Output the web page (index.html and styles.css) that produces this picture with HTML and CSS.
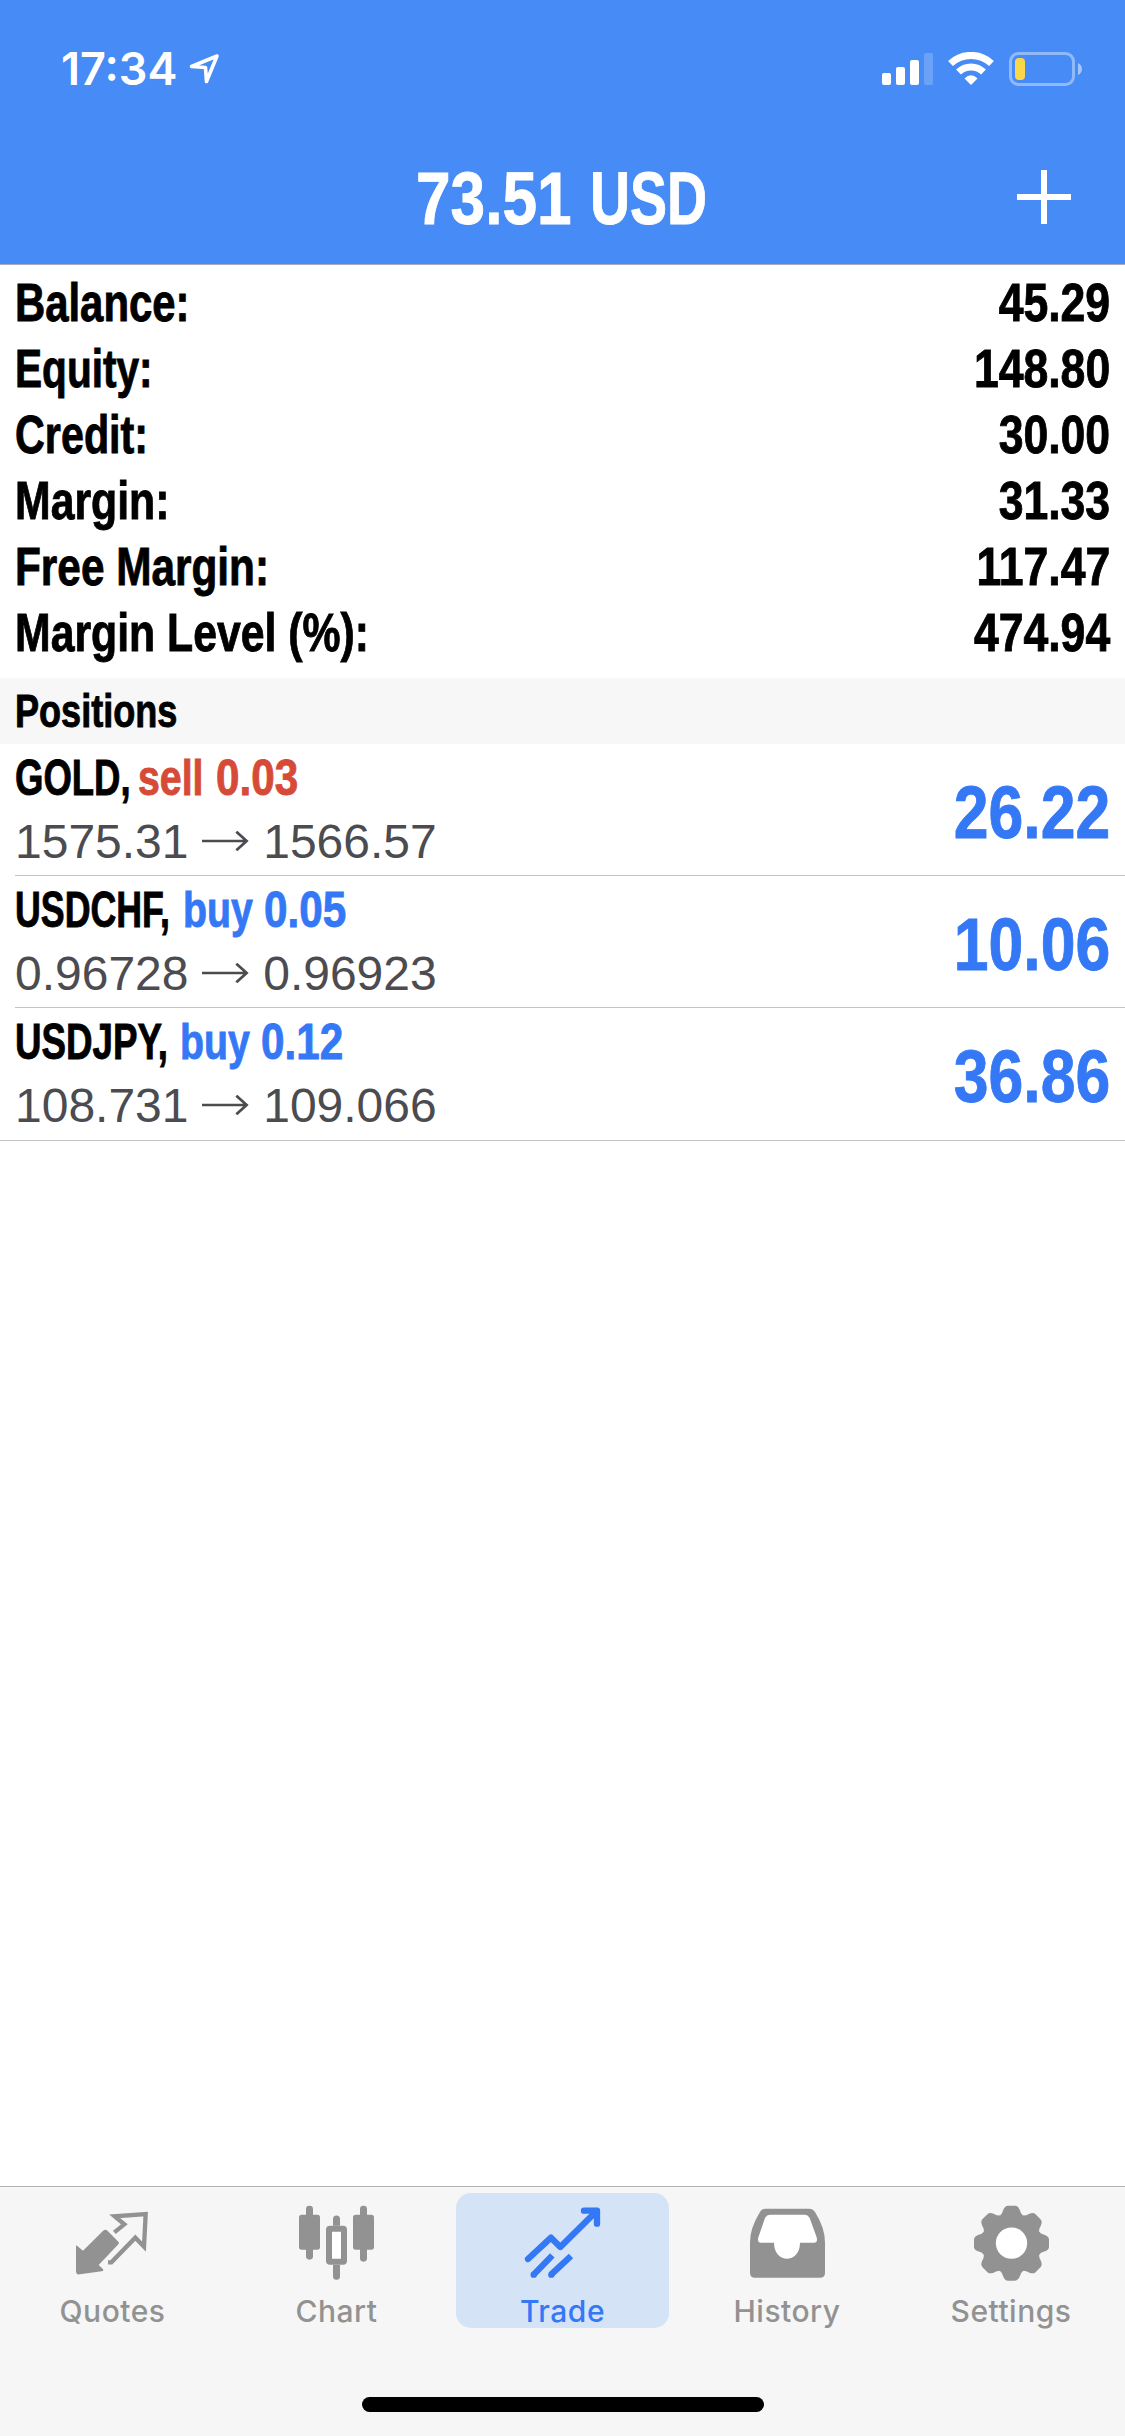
FILE: index.html
```html
<!DOCTYPE html>
<html lang="en">
<head>
<meta charset="utf-8">
<title>Trade</title>
<link rel="stylesheet" href="styles.css">
</head>
<body>
<div class="app">
  <header class="header">
    <div class="status">
      <span class="time">17:34</span>
      <svg class="location" viewBox="0 0 32 32" width="32" height="32"><path d="M3.500 13.500 29 3 18.500 28.500 17.500 14.500Z" fill="none" stroke="#fff" stroke-width="3.600" stroke-linejoin="round"/></svg>
      <svg class="indicators" viewBox="882 52 201 34" width="201" height="34">
        <g fill="#fff">
          <rect x="882" y="73" width="9" height="12" rx="2"/>
          <rect x="896" y="67" width="9" height="18" rx="2"/>
          <rect x="910" y="60" width="9" height="25" rx="2"/>
          <rect x="924" y="53" width="9" height="32" rx="2" opacity=".2"/>
        </g>
        <g fill="none" stroke="#fff">
          <path d="M950.500 63.500A30 30 0 0 1 991.500 63.500" stroke-width="7"/>
          <path d="M958.500 72A18 18 0 0 1 983.500 72" stroke-width="7"/>
        </g>
        <path d="M964.500 78.500Q971 72 977.500 78.500L971 85Z" fill="#fff"/>
        <rect x="1010.500" y="53.500" width="63" height="31" rx="8" fill="none" stroke="#fff" stroke-opacity=".4" stroke-width="3"/>
        <path d="M1078 63Q1082 65 1082 69T1078 75Z" fill="#fff" opacity=".5"/>
        <rect x="1015" y="58" width="10" height="22" rx="4" fill="#f9d749"/>
      </svg>
    </div>
    <div class="titlebar">
      <h1 class="title"><span class="amount">73.51</span> <span class="currency">USD</span></h1>
      <svg class="plus" viewBox="0 0 54 54" width="54" height="54"><path d="M0 27H54M27 0V54" stroke="#fff" stroke-width="6"/></svg>
    </div>
  </header>
  <main class="content">
    <dl class="summary">
      <div class="line balance"><dt>Balance:</dt><dd>45.29</dd></div>
      <div class="line equity"><dt>Equity:</dt><dd>148.80</dd></div>
      <div class="line credit"><dt>Credit:</dt><dd>30.00</dd></div>
      <div class="line"><dt>Margin:</dt><dd>31.33</dd></div>
      <div class="line free"><dt>Free Margin:</dt><dd>117.47</dd></div>
      <div class="line"><dt>Margin Level (%):</dt><dd>474.94</dd></div>
    </dl>
    <h2 class="section"><span class="section-name">Positions</span></h2>
    <ul class="positions">
      <li class="position gold">
        <div class="info">
          <div class="deal"><span class="symbol">GOLD,</span> <span class="side sell">sell</span> <span class="volume sell">0.03</span></div>
          <div class="prices">1575.31 <svg class="arrow" viewBox="0 0 144 60" width="48" height="20"><path d="M0 30H134M103 2 134 30 103 58" fill="none" stroke="currentColor" stroke-width="8"/></svg> 1566.57</div>
        </div>
        <div class="profit">26.22</div>
      </li>
      <li class="position usdchf">
        <div class="info">
          <div class="deal"><span class="symbol">USDCHF,</span> <span class="side buy">buy</span> <span class="volume buy">0.05</span></div>
          <div class="prices">0.96728 <svg class="arrow" viewBox="0 0 144 60" width="48" height="20"><path d="M0 30H134M103 2 134 30 103 58" fill="none" stroke="currentColor" stroke-width="8"/></svg> 0.96923</div>
        </div>
        <div class="profit">10.06</div>
      </li>
      <li class="position usdjpy">
        <div class="info">
          <div class="deal"><span class="symbol">USDJPY,</span> <span class="side buy">buy</span> <span class="volume buy">0.12</span></div>
          <div class="prices">108.731 <svg class="arrow" viewBox="0 0 144 60" width="48" height="20"><path d="M0 30H134M103 2 134 30 103 58" fill="none" stroke="currentColor" stroke-width="8"/></svg> 109.066</div>
        </div>
        <div class="profit">36.86</div>
      </li>
    </ul>
  </main>
  <footer class="footer">
    <nav class="tabs">
      <a class="tab">
        <svg class="icon" viewBox="225 100 225 240" width="75" height="80">
          <path d="M231 228 249 243 311 182Q316 178 321 182L355 216Q359 220 355 224L296 286 308 297Q313 303 305 305L240 314Q228 316 228 305V230Q228 226 231 228Z" fill="currentColor"/>
          <path d="M343 188 373 164 344 140 437 133 432 231 406 204 334 278H324" fill="none" stroke="currentColor" stroke-width="13"/>
        </svg>
        <span class="label">Quotes</span>
      </a>
      <a class="tab">
        <svg class="icon" viewBox="897 100 225 240" width="75" height="80">
          <g fill="currentColor">
            <rect x="918" y="108" width="21" height="162" rx="10"/><rect x="897" y="135" width="63" height="105" rx="8"/>
            <rect x="1080" y="108" width="21" height="168" rx="10"/><rect x="1059" y="135" width="63" height="105" rx="8"/>
            <path d="M999 168V148A10.500 10.500 0 0 1 1020 148V168ZM999 285H1020V320A10.500 10.500 0 0 1 999 320Z"/>
          </g>
          <rect x="987" y="177" width="45" height="99" rx="3" fill="#fff" stroke="currentColor" stroke-width="18"/>
        </svg>
        <span class="label">Chart</span>
      </a>
      <a class="tab active">
        <svg class="icon" viewBox="255 100 225 240" width="75" height="80">
          <g fill="none" stroke="currentColor" stroke-width="19">
            <path d="M264 268 333 204 361 232 470 124" stroke-linejoin="round" stroke-linecap="round"/>
            <path d="M432 123H471V162" stroke-linecap="round" stroke-linejoin="round"/>
            <path d="M337 257 281 315M393 259 333 315"/>
          </g>
          <g fill="currentColor"><circle cx="281" cy="315" r="9.500"/><circle cx="334" cy="315" r="9.500"/></g>
        </svg>
        <span class="label">Trade</span>
      </a>
      <a class="tab">
        <svg class="icon" viewBox="207 100 225 240" width="75" height="80">
          <path d="M254 117H384Q396 117 402 127 432 175 432 218V309Q432 324 417 324H222Q207 324 207 309V218Q207 175 237 127 243 117 254 117Z" fill="currentColor"/>
          <path d="M268 135H370Q381 135 386 145L407 203Q411 219 399 219H357C357 283 279 283 279 219H240Q228 219 232 203L252 145Q257 135 268 135Z" fill="#fff"/>
        </svg>
        <span class="label">History</span>
      </a>
      <a class="tab">
        <svg class="icon" viewBox="882 100 225 240" width="75" height="80">
          <g fill="currentColor">
            <circle cx="994.500" cy="220.500" r="90"/>
            <g id="teeth">
              <path id="tooth" d="M960 138Q967 132 970 120 975 108 984 108H1005Q1014 108 1019 120 1022 132 1029 138Z"/>
              <use href="#tooth" transform="rotate(45 994.500 220.500)"/>
              <use href="#tooth" transform="rotate(90 994.500 220.500)"/>
              <use href="#tooth" transform="rotate(135 994.500 220.500)"/>
            </g>
            <use href="#teeth" transform="rotate(180 994.500 220.500)"/>
          </g>
          <circle cx="994.500" cy="220.500" r="47" fill="#fff"/>
        </svg>
        <span class="label">Settings</span>
      </a>
    </nav>
    <div class="home"></div>
  </footer>
</div>
</body>
</html>
```
FILE: styles.css
```css
* { box-sizing: border-box; }
body, h1, h2, dl, dd, ul { margin: 0; padding: 0; }
body {
  background: #fff;
  color: #000;
  font-family: "Liberation Sans", Arial, sans-serif;
}
.app { display: flex; flex-direction: column; width: 1125px; height: 2436px; }

.header { height: 265px; background: #478bf6; color: #fff; border-bottom: 1px solid #a9adb5; }
.status { display: flex; align-items: center; height: 138px; padding: 0 42px 0 61px; }
.time { width: 116px; font: 600 45px/50px Inter, sans-serif; white-space: nowrap; }
.location { margin-left: 11px; }
.indicators { margin-left: auto; }
.titlebar { display: grid; grid-template-columns: 1fr auto 1fr; align-items: center; height: 121px; padding: 0 54px; }
.title { grid-column: 2; display: flex; width: 294px; font: bold 74px/81px "Liberation Sans", sans-serif; white-space: nowrap; }
.plus { justify-self: end; margin-bottom: 3px; }

/* condensed bold lettering */
.amount, .currency, dt, dd, .section-name, .symbol, .side, .volume, .profit {
  display: block;
  min-width: 0;
  transform: scaleX(var(--condense));
  transform-origin: left;
  white-space: nowrap;
  -webkit-text-stroke: .9px currentColor;
}
.amount { --condense: .84; flex: 0 0 174px; }
.currency { --condense: .75; }

.content { flex: 1; }
.summary { height: 413px; padding: 4px 15px 0; font: bold 54px/66px "Liberation Sans", sans-serif; }
.line { display: flex; justify-content: space-between; height: 66px; }
dt { --condense: .792; }
dd { --condense: .825; transform-origin: right; }
.balance dt { --condense: .775; }
.equity dt { --condense: .752; }
.credit dt { --condense: .765; }
.free dt { --condense: .784; }
.section { height: 66px; padding-left: 15px; background: #f7f7f7; font: bold 47px/66px "Liberation Sans", sans-serif; }
.section-name { --condense: .768; }

.positions { list-style: none; border-bottom: 1px solid #c4c4c6; }
.position { display: flex; justify-content: space-between; align-items: flex-start; height: 132px; margin-left: 15px; padding: 1px 15px 0 0; border-bottom: 1px solid #c4c4c6; }
.position:last-child { border-bottom-color: transparent; }
.deal { display: flex; font: bold 50px/66px "Liberation Sans", sans-serif; }
.symbol, .side { width: 0; }
.symbol { --condense: .73; flex: 0 0 123px; }
.side { --condense: .785; flex: 0 0 78px; }
.volume { --condense: .845; }
.usdchf .symbol { --condense: .715; flex-basis: 168px; }
.usdjpy .symbol { --condense: .734; flex-basis: 165px; }
.usdchf .side, .usdjpy .side { flex-basis: 81px; }
/* a box wider or narrower than its lettering must scale from the same left edge */
.symbol, .side, .amount, .currency { transform-origin: 0 50%; }
.prices { color: #4b4b50; font-size: 48px; line-height: 61px; }
.arrow { vertical-align: 7px; }
.sell { color: #d64b38; }
.buy, .profit { color: #3478f6; }
.profit { --condense: .845; margin-top: 27px; transform-origin: right; font: bold 74px/81px "Liberation Sans", sans-serif; }

.footer { display: flex; flex-direction: column; align-items: center; height: 250px; background: #f6f6f6; border-top: 1px solid #b2b2b2; }
.tabs { display: grid; grid-template-columns: 225px 223px 229px 220px 228px; justify-items: center; width: 100%; height: 148px; padding-top: 6px; }
.tab { display: flex; flex-direction: column; align-items: center; width: 213px; height: 135px; padding-top: 10px; border-radius: 15px; color: #929292; }
.active { background: #d5e3f6; color: #3478f6; }
.icon { display: block; flex: none; overflow: visible; }
.label { margin-top: 10px; font: 500 30px/36px Inter, sans-serif; letter-spacing: .5px; }
.home { width: 402px; height: 15px; margin-top: 62px; border-radius: 8px; background: #000; }
```
